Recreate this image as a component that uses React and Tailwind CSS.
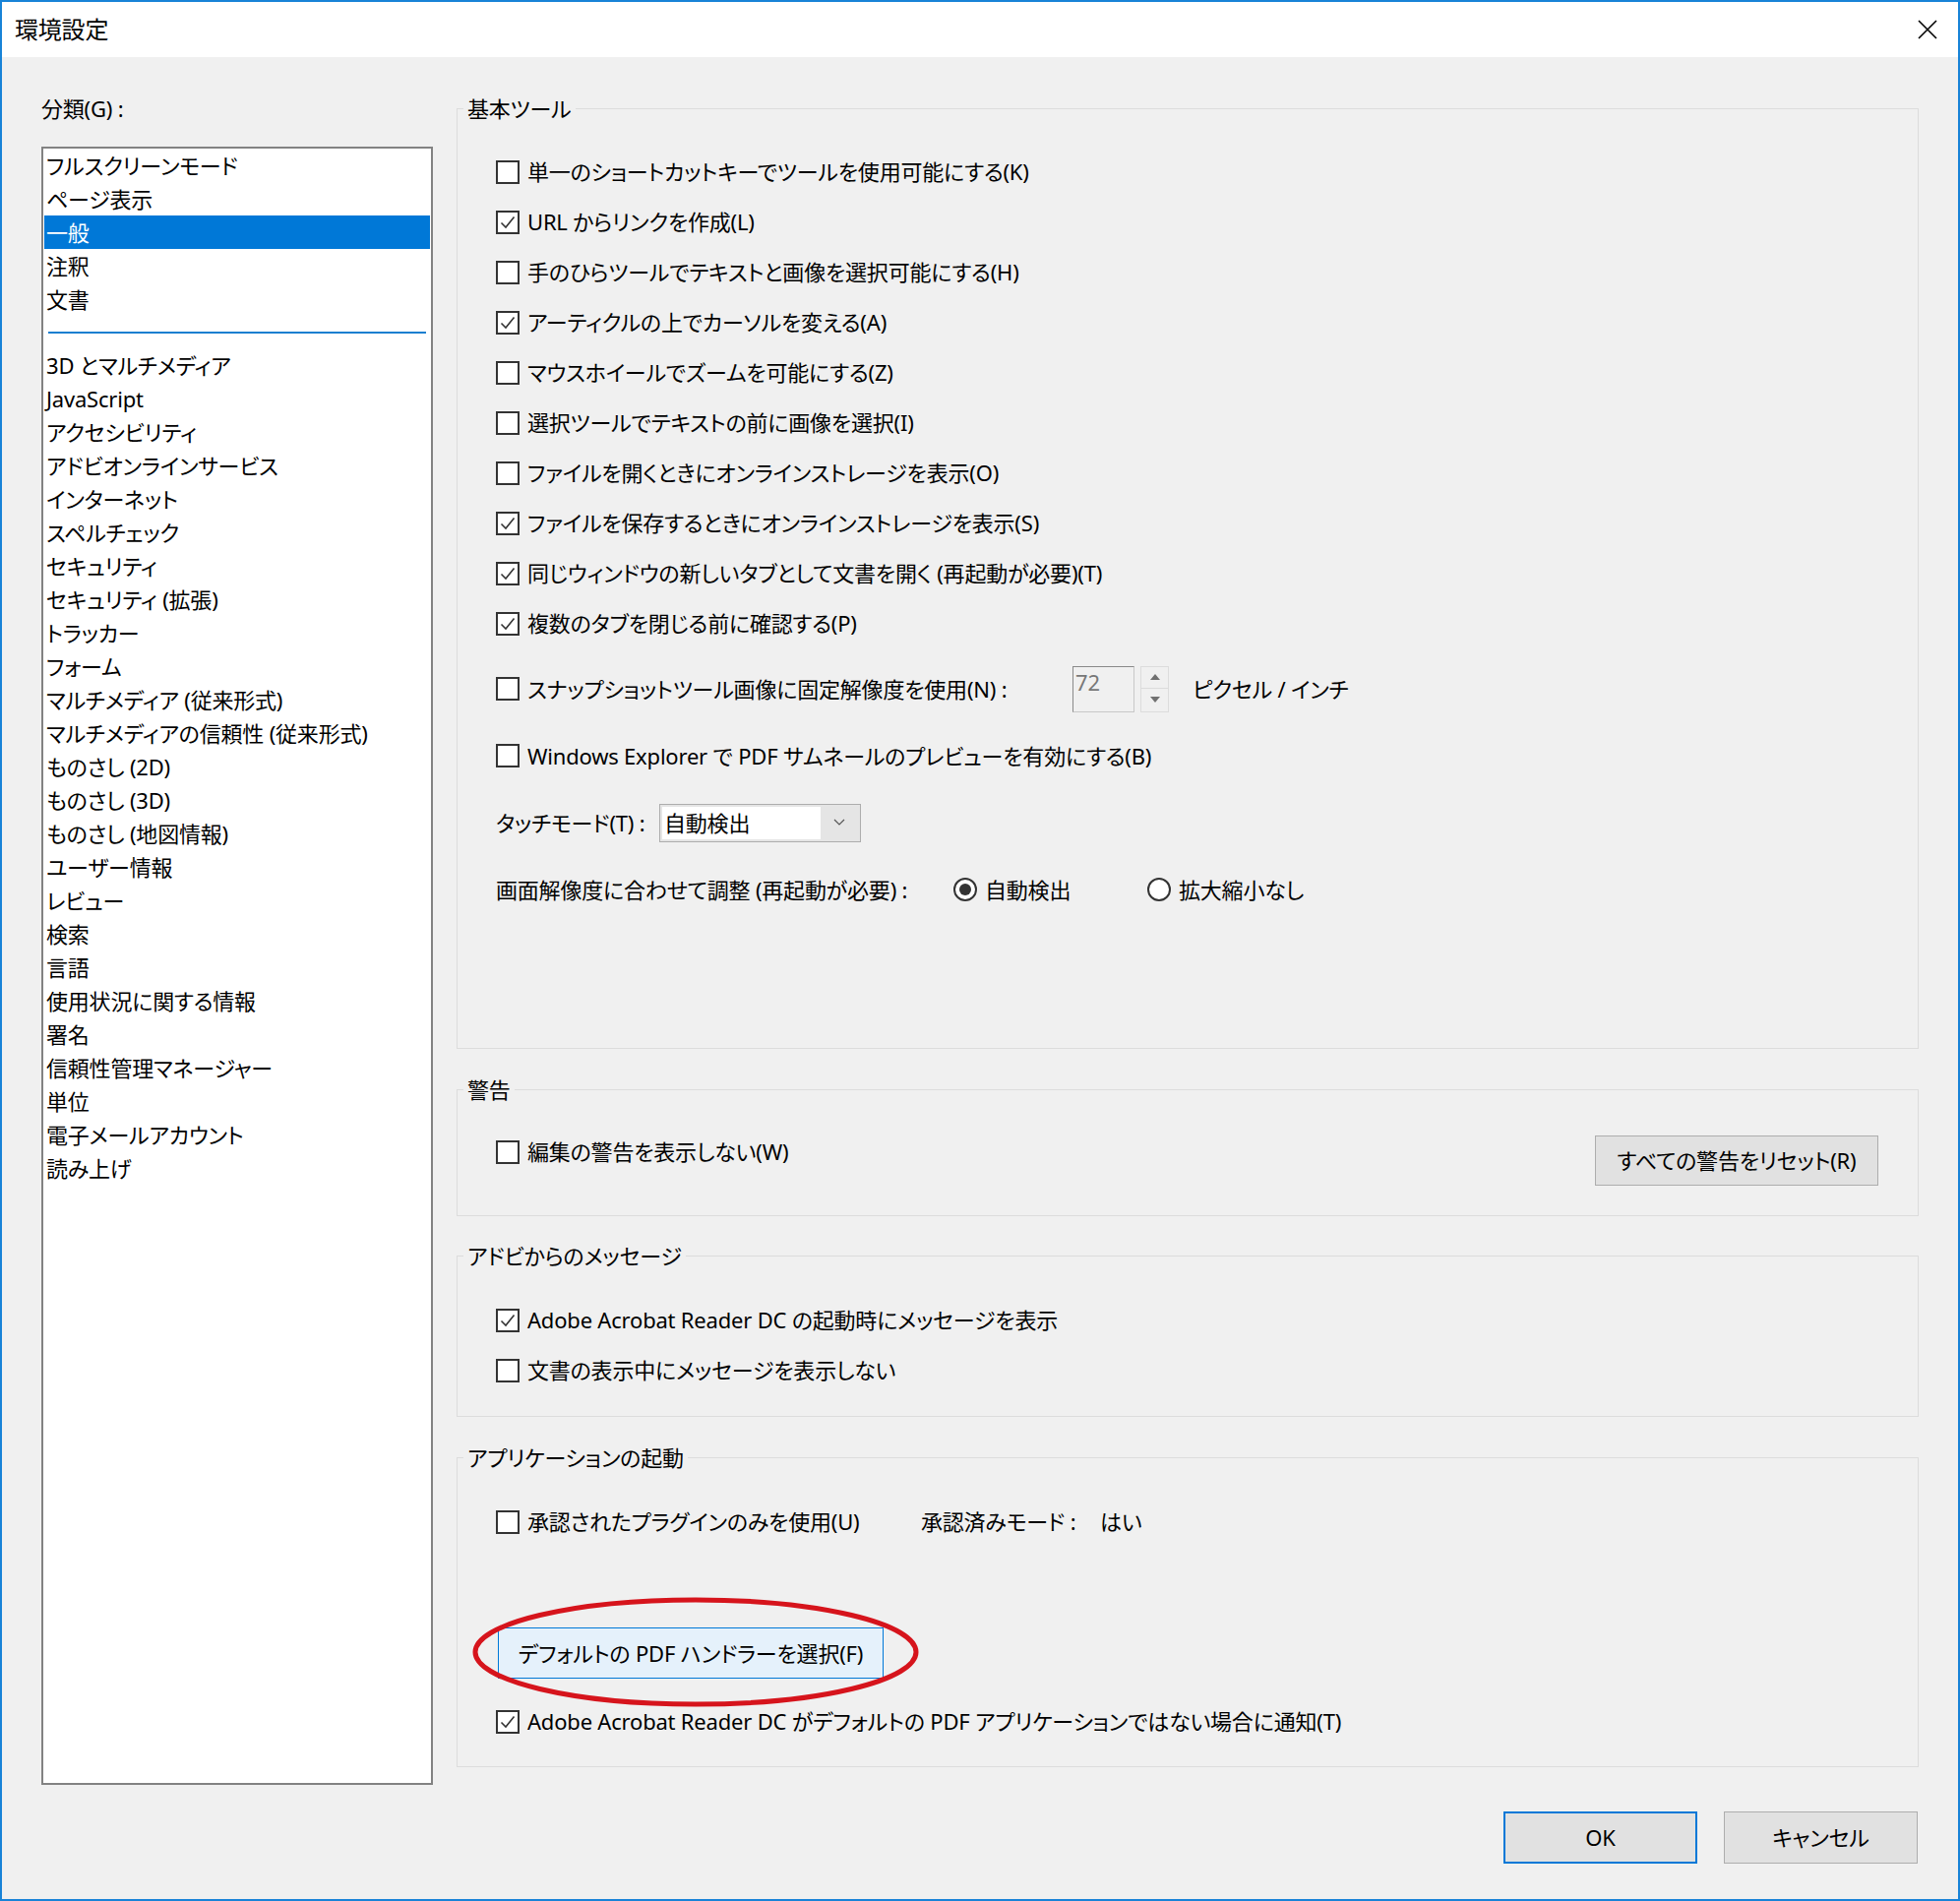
import React from 'react';

// 環境設定 dialog (Windows 10 look)
const font = "font-['Noto_Sans','Noto_Sans_CJK_JP',sans-serif] [font-feature-settings:'palt']";

const categories = [
  '3D とマルチメディア', 'JavaScript', 'アクセシビリティ', 'アドビオンラインサービス', 'インターネット',
  'スペルチェック', 'セキュリティ', 'セキュリティ (拡張)', 'トラッカー', 'フォーム',
  'マルチメディア (従来形式)', 'マルチメディアの信頼性 (従来形式)', 'ものさし (2D)', 'ものさし (3D)',
  'ものさし (地図情報)', 'ユーザー情報', 'レビュー', '検索', '言語', '使用状況に関する情報', '署名',
  '信頼性管理マネージャー', '単位', '電子メールアカウント', '読み上げ',
];

const basicTools = [
  ['単一のショートカットキーでツールを使用可能にする(K)', false],
  ['URL からリンクを作成(L)', true],
  ['手のひらツールでテキストと画像を選択可能にする(H)', false],
  ['アーティクルの上でカーソルを変える(A)', true],
  ['マウスホイールでズームを可能にする(Z)', false],
  ['選択ツールでテキストの前に画像を選択(I)', false],
  ['ファイルを開くときにオンラインストレージを表示(O)', false],
  ['ファイルを保存するときにオンラインストレージを表示(S)', true],
  ['同じウィンドウの新しいタブとして文書を開く (再起動が必要)(T)', true],
  ['複数のタブを閉じる前に確認する(P)', true],
];

function CheckBox({ checked }) {
  return (
    <span className="w-[24px] h-[24px] border-2 border-[#333333] bg-white flex items-center justify-center shrink-0">
      {checked && (
        <svg width="18" height="18" viewBox="0 0 18 18" fill="none">
          <path d="M2.5 9.5 L7 14 L15.5 3.5" stroke="#333333" strokeWidth="1.6" />
        </svg>
      )}
    </span>
  );
}

function CheckRow({ checked, children }) {
  return (
    <div className="h-[51px] flex items-center gap-[8px]">
      <CheckBox checked={checked} />
      <span>{children}</span>
    </div>
  );
}

function Radio({ checked }) {
  return (
    <span className="w-[24px] h-[24px] rounded-full border-2 border-[#333333] bg-white flex items-center justify-center shrink-0">
      {checked && <span className="w-[12px] h-[12px] rounded-full bg-[#333333]" />}
    </span>
  );
}

function Group({ label, className, children }) {
  return (
    <div className={`relative border border-[#dcdcdc] ${className}`}>
      <span className="absolute -top-[18px] left-[6px] px-[4px] bg-[#f0f0f0] leading-[34px]">{label}</span>
      {children}
    </div>
  );
}

export default function App() {
  return (
    <div className={`w-[1992px] h-[1932px] border-2 border-[#1883d7] bg-[#f0f0f0] text-[22px] tracking-[-0.2px] text-black flex flex-col ${font}`}>
      {/* タイトルバー */}
      <div className="h-[56px] bg-white flex items-center justify-between pl-[13px] pr-[21px] shrink-0">
        <span className="text-[24px]">環境設定</span>
        <svg width="20" height="20" viewBox="0 0 20 20">
          <path d="M1 1 L19 19 M19 1 L1 19" stroke="#000" strokeWidth="1.6" />
        </svg>
      </div>

      <div className="flex gap-[24px] pl-[40px]">
        {/* 分類 */}
        <div className="w-[398px] pt-[37px] flex flex-col">
          <div className="h-[30px] flex items-center">分類(G) :</div>
          <div className="mt-[24px] h-[1665px] border-2 border-[#828282] bg-white pt-0 px-[1px]">
            {['フルスクリーンモード', 'ページ表示', '一般', '注釈', '文書'].map((c) => (
              <div
                key={c}
                className={`h-[34px] flex items-center pl-[2px] ${c === '一般' ? 'bg-[#0078d7] text-white' : ''}`}
              >
                {c}
              </div>
            ))}
            <div className="h-[33px] flex items-center px-[4px]">
              <div className="w-full h-[2px] bg-[#1a7fd0]" />
            </div>
            {categories.map((c) => (
              <div key={c} className="h-[34px] flex items-center pl-[2px]">{c}</div>
            ))}
          </div>
        </div>

        {/* 設定 */}
        <div className="w-[1486px] mt-[52px] flex flex-col">
          <Group label="基本ツール" className="h-[956px] pt-[38px] pl-[39px]">
            {basicTools.map(([t, c]) => (
              <CheckRow key={t} checked={c}>{t}</CheckRow>
            ))}
            <div className="mt-[7px] h-[68px] flex items-center">
              <div className="w-[586px] flex items-center gap-[8px]">
                <CheckBox />
                <span>スナップショットツール画像に固定解像度を使用(N) :</span>
              </div>
              <div className="w-[63px] h-[47px] border border-[#c8c8c8] border-t-[#8a8a8a] border-l-[#8a8a8a] bg-[#f0f0f0] text-[#777777] pl-[2px] leading-[30px]">
                72
              </div>
              <div className="ml-[6px] w-[29px] h-[47px] flex flex-col">
                <div className="h-[23px] border border-[#dcdcdc] flex items-center justify-center">
                  <svg width="10" height="6" viewBox="0 0 10 6"><path d="M5 0 L10 6 L0 6 Z" fill="#707070" /></svg>
                </div>
                <div className="h-[24px] border border-[#dcdcdc] border-t-0 flex items-center justify-center">
                  <svg width="10" height="6" viewBox="0 0 10 6"><path d="M0 0 L10 0 L5 6 Z" fill="#707070" /></svg>
                </div>
              </div>
              <span className="ml-[24px]">ピクセル / インチ</span>
            </div>
            <div className="h-[68px] flex items-center gap-[8px]">
              <CheckBox />
              <span>Windows Explorer で PDF サムネールのプレビューを有効にする(B)</span>
            </div>
            <div className="h-[68px] flex items-center">
              <span className="w-[166px]">タッチモード(T) :</span>
              <div className="w-[205px] h-[39px] border border-[#adadad] bg-[#e5e5e5] p-[2px] flex">
                <div className="w-[161px] bg-white flex items-center pl-[2px]">自動検出</div>
                <div className="flex-1 flex items-center justify-center">
                  <svg width="12" height="8" viewBox="0 0 12 8" fill="none"><path d="M1 1 L6 6 L11 1" stroke="#555" strokeWidth="1.2" /></svg>
                </div>
              </div>
            </div>
            <div className="h-[68px] flex items-center">
              <span className="w-[465px]">画面解像度に合わせて調整 (再起動が必要) :</span>
              <div className="w-[197px] flex items-center gap-[8px]">
                <Radio checked />
                <span>自動検出</span>
              </div>
              <div className="flex items-center gap-[8px]">
                <Radio />
                <span>拡大縮小なし</span>
              </div>
            </div>
          </Group>

          <Group label="警告" className="mt-[41px] h-[129px] pt-[37px] pl-[39px] pr-[40px] flex justify-between items-start">
            <CheckRow>編集の警告を表示しない(W)</CheckRow>
            <button className="mt-[9px] w-[288px] h-[51px] border border-[#adadad] bg-[#e1e1e1]">すべての警告をリセット(R)</button>
          </Group>

          <Group label="アドビからのメッセージ" className="mt-[40px] h-[164px] pt-[39px] pl-[39px]">
            <CheckRow checked>Adobe Acrobat Reader DC の起動時にメッセージを表示</CheckRow>
            <CheckRow>文書の表示中にメッセージを表示しない</CheckRow>
          </Group>

          <Group label="アプリケーションの起動" className="mt-[41px] h-[315px] pt-[39px] pl-[39px]">
            <div className="h-[51px] flex items-center">
              <div className="w-[432px] flex items-center gap-[8px]">
                <CheckBox />
                <span>承認されたプラグインのみを使用(U)</span>
              </div>
              <span className="w-[182px]">承認済みモード :</span>
              <span>はい</span>
            </div>
            <div className="relative mt-[82px] ml-[2px] w-[392px] h-[52px]">
              <button className="w-full h-full border border-[#0078d7] bg-[#e5f1fb]">デフォルトの PDF ハンドラーを選択(F)</button>
              <svg className="absolute -left-[28px] -top-[32px]" width="460" height="116" viewBox="0 0 460 116" fill="none">
                <ellipse cx="229" cy="57" rx="224" ry="53" stroke="#d6141c" strokeWidth="5" />
              </svg>
            </div>
            <div className="mt-[18px]">
              <CheckRow checked>Adobe Acrobat Reader DC がデフォルトの PDF アプリケーションではない場合に通知(T)</CheckRow>
            </div>
          </Group>

          <div className="mt-[45px] pr-[1px] flex justify-end gap-[27px]">
            <button className="w-[197px] h-[53px] border-2 border-[#0078d7] bg-[#e1e1e1]">OK</button>
            <button className="w-[197px] h-[53px] border border-[#adadad] bg-[#e1e1e1]">キャンセル</button>
          </div>
        </div>
      </div>
    </div>
  );
}
